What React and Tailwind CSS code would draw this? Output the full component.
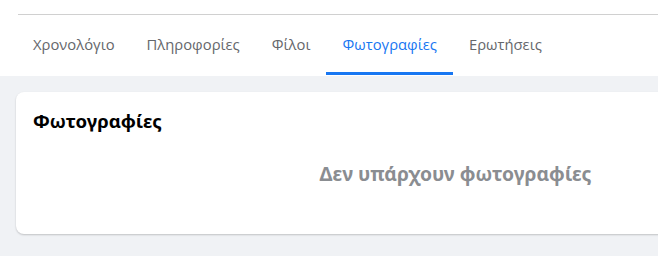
export default function App() {
  const tabs = ["Χρονολόγιο", "Πληροφορίες", "Φίλοι", "Φωτογραφίες", "Ερωτήσεις"];
  const active = 3;
  return (
    <div className="w-[658px] h-[256px] overflow-hidden bg-[#f0f2f5]" style={{ fontFamily: '"Noto Sans", "Open Sans", sans-serif' }}>
      <div className="bg-white h-[76px] pl-[18px] flex flex-col">
        <div className="h-[15px] border-b border-[#d0d0d0] w-[900px] shrink-0" />
        <div className="flex -ml-px mt-[14px] h-[46px] font-['Open_Sans',sans-serif]">
          {tabs.map((t, i) => (
            <div
              key={t}
              className={
                "px-4 flex items-start pt-[4px] text-[14.8px] font-medium border-b-[3px] " +
                (i === active ? "text-[#1877f2] border-[#1877f2]" : "text-[#65676b] border-transparent")
              }
            >
              {t}
            </div>
          ))}
        </div>
      </div>
      <div className="pl-4 pt-4">
        <div className="w-[879px] h-[142px] bg-white rounded-lg shadow-[0_1px_2px_rgba(0,0,0,0.2)] flex flex-col">
          <div className="pl-[17px] pt-[17px] text-[18.6px] font-bold text-black leading-6">Φωτογραφίες</div>
          <div className="flex justify-center mt-[27px] text-[19.3px] font-bold text-[#8a8d91]">Δεν υπάρχουν φωτογραφίες</div>
        </div>
      </div>
    </div>
  );
}
